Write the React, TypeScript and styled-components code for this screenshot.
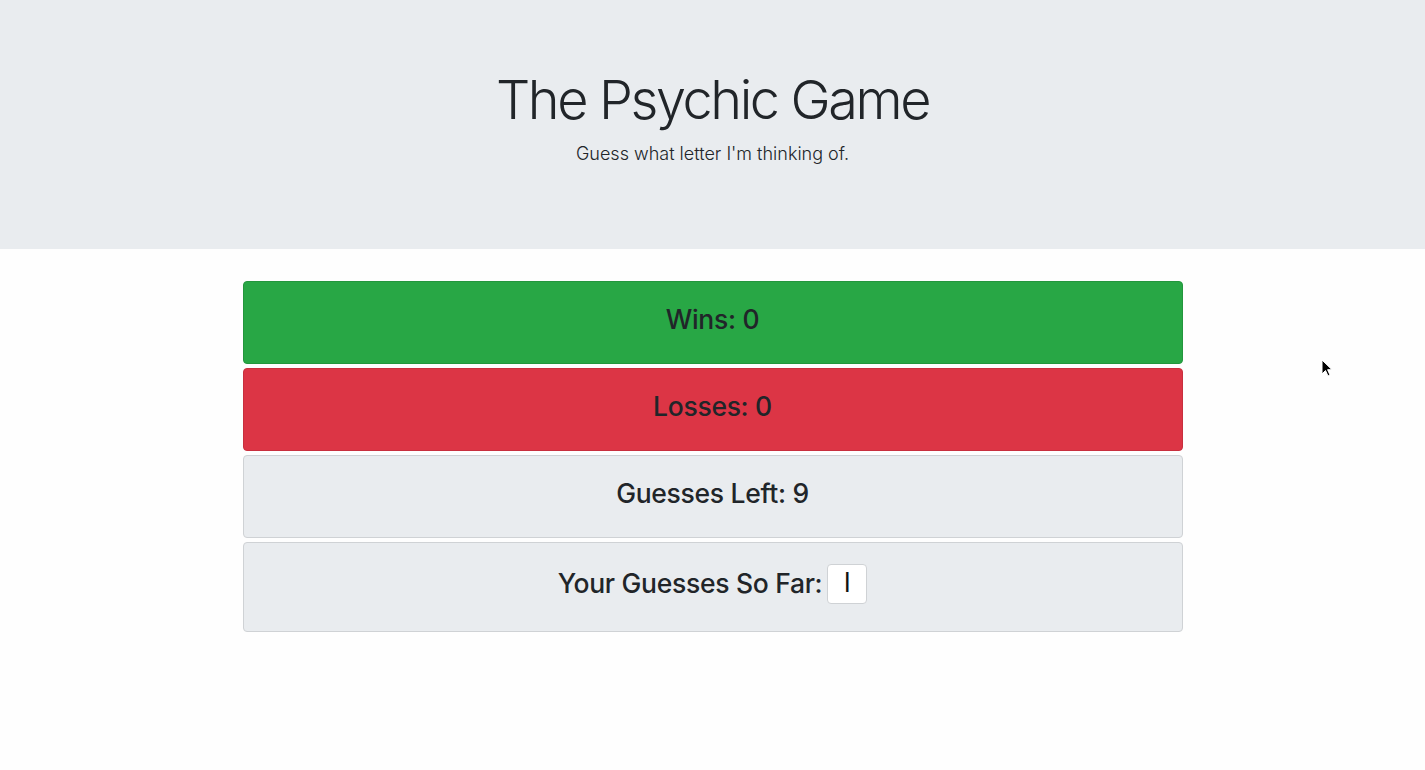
import React from "react";
import styled, { createGlobalStyle } from "styled-components";

const Global = createGlobalStyle`
  html, body { margin: 0; padding: 0; background: #fefefe; }
  body {
    font-family: Inter, Roboto, "Helvetica Neue", Arial, sans-serif;
    color: #212529;
  }
  * { box-sizing: border-box; }
`;

const Page = styled.div`
  position: relative;
  min-height: 770px;
`;

const Jumbotron = styled.header`
  background: #e9ecef;
  height: 249px;
  display: flex;
  flex-direction: column;
  align-items: center;
  padding-top: 68px;
`;

const Title = styled.h1`
  margin: 0;
  font-size: 54px;
  font-weight: 300;
  line-height: 1.2;
  letter-spacing: -2.4px;
`;

const Lead = styled.p`
  margin: 7px 0 0;
  font-size: 18px;
  font-weight: 300;
  line-height: 1.5;
`;

const Container = styled.main`
  width: 940px;
  margin: 32px auto 0;
  display: flex;
  flex-direction: column;
  gap: 4px;
`;

const Card = styled.div<{ $bg: string; $border: string; $h: number; $lift: number }>`
  height: ${(p) => p.$h}px;
  padding-bottom: ${(p) => p.$lift}px;
  background: ${(p) => p.$bg};
  border: 1px solid ${(p) => p.$border};
  border-radius: 4px;
  display: flex;
  align-items: center;
  justify-content: center;
  gap: 5px;
`;

const Label = styled.h4`
  margin: 0;
  font-size: 26.5px;
  font-weight: 500;
  line-height: 1.2;
  letter-spacing: -0.3px;
`;

const LetterBox = styled.span`
  display: inline-flex;
  align-items: center;
  justify-content: center;
  width: 40px;
  height: 40px;
  background: #fff;
  border: 1px solid #cfd2d5;
  border-radius: 4px;
  font-family: "Liberation Sans", Arial, sans-serif;
  font-size: 27px;
  color: #111;
`;

const Cursor = styled.svg`
  position: absolute;
  left: 1321px;
  top: 359px;
`;

export default function App() {
  return (
    <Page>
      <Global />
      <Jumbotron>
        <Title>The Psychic Game</Title>
        <Lead>Guess what letter I'm thinking of.</Lead>
      </Jumbotron>
      <Container>
        <Card $bg="#28a745" $border="#23963d" $h={83} $lift={5}>
          <Label>Wins: 0</Label>
        </Card>
        <Card $bg="#dc3545" $border="#c82f3e" $h={83} $lift={5}>
          <Label>Losses: 0</Label>
        </Card>
        <Card $bg="#e9ecef" $border="#cfd2d5" $h={83} $lift={5}>
          <Label>Guesses Left: 9</Label>
        </Card>
        <Card $bg="#e9ecef" $border="#cfd2d5" $h={90} $lift={7}>
          <Label>Your Guesses So Far:</Label>
          <LetterBox>l</LetterBox>
        </Card>
      </Container>
      <Cursor width="14" height="20" viewBox="0 0 14 20">
        <path d="M1 1 L1 15 L4.5 11.5 L7 17 L9 16 L6.6 10.7 L11 10.7 Z" fill="#000" stroke="#fff" strokeWidth="1" />
      </Cursor>
    </Page>
  );
}
